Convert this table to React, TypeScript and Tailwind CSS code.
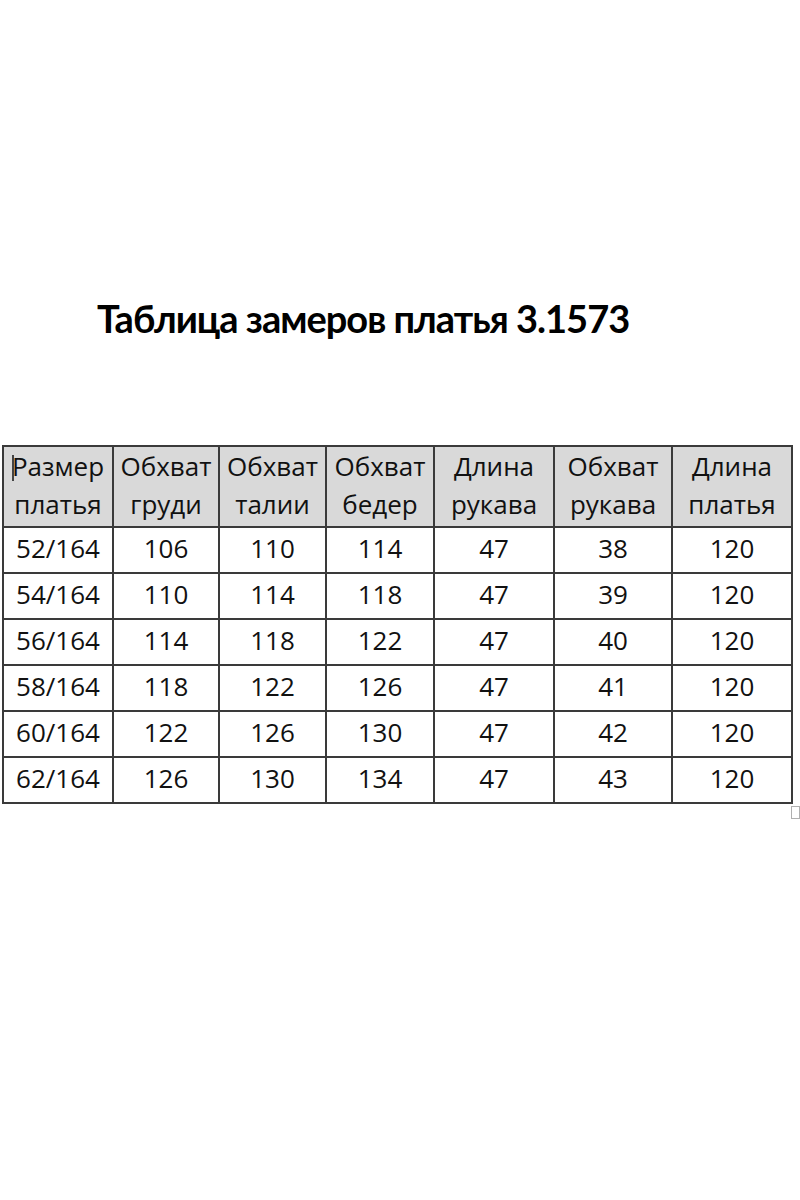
import React from "react";

const header: [string, string][] = [
  ["Размер", "платья"],
  ["Обхват", "груди"],
  ["Обхват", "талии"],
  ["Обхват", "бедер"],
  ["Длина", "рукава"],
  ["Обхват", "рукава"],
  ["Длина", "платья"],
];

const rows: string[][] = [
  ["52/164", "106", "110", "114", "47", "38", "120"],
  ["54/164", "110", "114", "118", "47", "39", "120"],
  ["56/164", "114", "118", "122", "47", "40", "120"],
  ["58/164", "118", "122", "126", "47", "41", "120"],
  ["60/164", "122", "126", "130", "47", "42", "120"],
  ["62/164", "126", "130", "134", "47", "43", "120"],
];

const widths = [110, 106, 107, 108, 120, 118, 120];

export default function App() {
  return (
    <div
      className="w-[800px] h-[1200px] bg-white text-black overflow-hidden"
      style={{ fontFamily: '"Open Sans", "Noto Sans", sans-serif' }}
    >
      <div className="pt-[294px] pl-[97px]">
        <h1
          className="text-[38px] leading-[48px] font-bold tracking-[-1px] whitespace-nowrap"
          style={{ fontFamily: 'Lato, "Open Sans", sans-serif' }}
        >
          Таблица замеров платья 3.1573
        </h1>
      </div>
      <div className="relative mt-[103px] ml-[2px] w-[789px]">
        <table className="w-[789px] table-fixed border-collapse text-[26px] text-[#111]">
          <colgroup>
            {widths.map((w, i) => (
              <col key={i} style={{ width: w }} />
            ))}
          </colgroup>
          <thead>
            <tr className="h-[79px] bg-[#d9d9d9]">
              {header.map(([a, b], i) => (
                <th
                  key={i}
                  className="relative border-2 border-[#3a3a3a] p-0 pb-[3px] font-normal text-center leading-[38px] align-middle"
                >
                  {i === 0 && (
                    <span className="absolute left-[8px] top-[8px] h-[26px] w-[2px] bg-[#444]" />
                  )}
                  <div>{a}</div>
                  <div>{b}</div>
                </th>
              ))}
            </tr>
          </thead>
          <tbody>
            {rows.map((r, ri) => (
              <tr key={ri} className="h-[46px]">
                {r.map((c, ci) => (
                  <td
                    key={ci}
                    className="border-2 border-[#3a3a3a] p-0 pb-[4px] text-center leading-[30px] align-middle"
                  >
                    {c}
                  </td>
                ))}
              </tr>
            ))}
          </tbody>
        </table>
        <div className="absolute right-[-9px] -bottom-[15px] w-[9px] h-[13px] border border-[#b0b0b0] bg-white" />
      </div>
    </div>
  );
}
